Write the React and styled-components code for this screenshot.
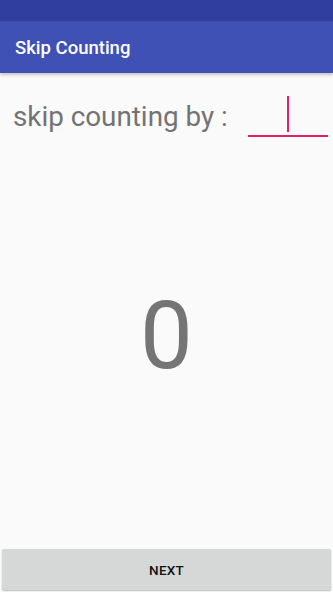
import React from "react";
import styled, { createGlobalStyle } from "styled-components";

const Global = createGlobalStyle`
  html, body { margin: 0; padding: 0; height: 100%; }
  body { background: #fafafa; font-family: Roboto, "Noto Sans", sans-serif; }
  #root { height: 100%; }
`;

const Screen = styled.div`
  display: flex;
  flex-direction: column;
  height: 592px;
  width: 333px;
  background: #fafafa;
  overflow: hidden;
`;

const StatusBar = styled.div`
  height: 21px;
  background: #303f9f;
  flex-shrink: 0;
`;

const AppBar = styled.div`
  height: 52px;
  background: #3f51b5;
  display: flex;
  align-items: center;
  padding-left: 15px;
  box-shadow: 0 2px 3px rgba(0, 0, 0, 0.22);
  position: relative;
  z-index: 1;
  flex-shrink: 0;
`;

const Title = styled.div`
  color: #ffffff;
  font-size: 18.5px;
  font-weight: 500;
  margin-top: 1px;
`;

const Content = styled.div`
  flex: 1;
  display: flex;
  flex-direction: column;
`;

const Row = styled.div`
  display: flex;
  align-items: flex-end;
  padding: 23px 5px 0 13px;
  height: 41px;
`;

const Label = styled.div`
  font-size: 27.8px;
  color: #737373;
  flex: 1;
  line-height: 32px;
  padding-bottom: 4px;
`;

const Field = styled.div`
  width: 80px;
  height: 41px;
  border-bottom: 2px solid #e91e63;
  display: flex;
  justify-content: center;
  align-items: flex-end;
  padding-bottom: 3px;
  box-sizing: border-box;
  flex-shrink: 0;
`;

const Cursor = styled.div`
  width: 2px;
  height: 36px;
  background: #e91e63;
`;

const Middle = styled.div`
  flex: 1;
  display: flex;
  align-items: center;
  justify-content: center;
  padding-bottom: 14px;
`;

const Count = styled.div`
  font-size: 94px;
  color: #757575;
  line-height: 1;
`;

const ButtonWrap = styled.div`
  padding: 0 2px 2px 2px;
`;

const Button = styled.div`
  height: 41px;
  background: #d6d7d7;
  border-radius: 2px;
  box-shadow: 0 1px 1.5px rgba(0, 0, 0, 0.25);
  display: flex;
  align-items: center;
  justify-content: center;
  font-size: 13.5px;
  font-weight: 500;
  color: #111;
  letter-spacing: 0.2px;
`;

export default function App() {
  return (
    <>
      <Global />
      <Screen>
        <StatusBar />
        <AppBar>
          <Title>Skip Counting</Title>
        </AppBar>
        <Content>
          <Row>
            <Label>skip counting by :</Label>
            <Field>
              <Cursor />
            </Field>
          </Row>
          <Middle>
            <Count>0</Count>
          </Middle>
          <ButtonWrap>
            <Button>NEXT</Button>
          </ButtonWrap>
        </Content>
      </Screen>
    </>
  );
}
